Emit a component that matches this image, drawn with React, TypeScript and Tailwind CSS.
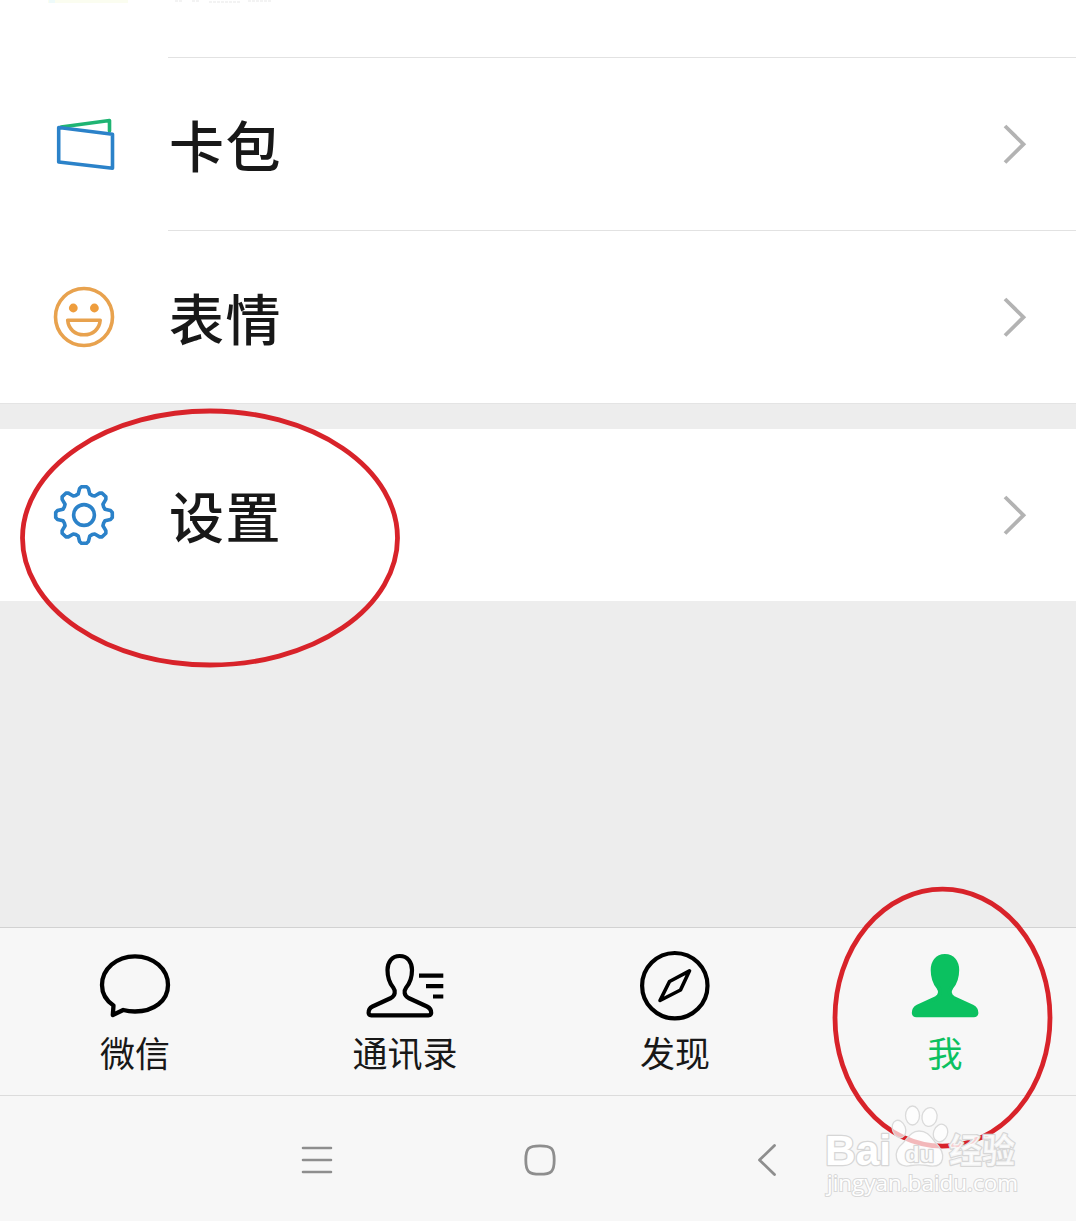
import type { ReactNode } from "react";

// One gear tooth plus the valley that leads to the next one, in coordinates around the hub
const TOOTH = [
  [-5.8, -21],
  [-4.4, -26.5],
  [-2.6, -28.3],
  [2.6, -28.3],
  [4.4, -26.5],
  [5.8, -21],
  [8.1, -19.6],
];

const gearPoints = Array.from({ length: 8 })
  .flatMap((_, i) => {
    const a = (i * Math.PI) / 4;
    return TOOTH.map(
      ([x, y]) =>
        `${(x * Math.cos(a) - y * Math.sin(a)).toFixed(2)},${(x * Math.sin(a) + y * Math.cos(a)).toFixed(2)}`
    );
  })
  .join(" ");

function CardIcon() {
  return (
    <svg width="64" height="64" viewBox="52 112 64 64" fill="none" strokeWidth="3.6" strokeLinejoin="round" strokeLinecap="round">
      <path d="M61 127 L109.500 120.500 V131" stroke="#1fb473" />
      <path d="M58.700 127.500 L112.500 134.300 V168.200 L58.700 162 Z" stroke="#2b82c9" />
    </svg>
  );
}

function SmileIcon() {
  return (
    <svg width="64" height="64" viewBox="52 285 64 64" fill="none" stroke="#e8a24e" strokeWidth="3.6">
      <circle cx="84" cy="317" r="28.5" />
      <circle cx="73.3" cy="308" r="4.4" fill="#ee9d3d" stroke="none" />
      <circle cx="94.4" cy="308" r="4.4" fill="#ee9d3d" stroke="none" />
      <path d="M67.7 320.2 H100.2 C99.5 329 93 334.8 84 334.8 C75 334.8 68.4 329 67.7 320.2 Z" strokeLinejoin="round" />
    </svg>
  );
}

function GearIcon() {
  return (
    <svg width="64" height="64" viewBox="-32 -32 64 64" fill="none" stroke="#2b82c9" strokeWidth="3.6" strokeLinejoin="round">
      <polygon points={gearPoints} />
      <circle r="10.4" />
    </svg>
  );
}

function ChatIcon() {
  return (
    <svg width="80" height="80" viewBox="95 945 80 80" fill="none" stroke="#000" strokeWidth="4.3" strokeLinejoin="round">
      <path d="M113.500 1005.500 C106.500 1000.800 102 993.500 102 985 C102 969 116.500 956.300 135 956.300 C153.500 956.300 168 969 168 985 C168 1001 153.500 1011.500 135 1011.500 C130.500 1011.500 127 1011 123.200 1010 L112.800 1015 Z" />
    </svg>
  );
}

const PERSON =
  "M399.7 956 C391.500 956 387.500 962.500 387.500 970 C387.500 978 389.500 983 393.200 987.500 C395.800 991 395.300 995.500 391 998 L372.500 1006.500 C369.500 1008 368.500 1010.500 368.600 1013 C368.800 1014.600 369.800 1015.300 371.300 1015.300 H428.500 C430 1015.300 431 1014.600 431.200 1013 C431.300 1010.500 430 1008 427 1006.500 L408.500 998 C404 995.500 403.600 991 406.200 987.500 C410 983 412 978 412 970 C412 962.500 408 956 399.700 956 Z";

function ContactsIcon() {
  return (
    <svg width="80" height="80" viewBox="365 945 80 80" fill="none" stroke="#000" strokeWidth="4.2" strokeLinejoin="round">
      <path d={PERSON} />
      <path d="M419 975.700 H443.300 M426 986.100 H443.300 M433 996.500 H443.300" />
    </svg>
  );
}

function CompassIcon() {
  return (
    <svg width="80" height="80" viewBox="635 945 80 80" fill="none" stroke="#000" strokeWidth="4.2" strokeLinejoin="round">
      <circle cx="674.8" cy="985.700" r="32.700" />
      <path d="M689.500 970.800 L669.500 981.500 L660 1000.500 L680.500 990 Z" strokeWidth="3.600" />
    </svg>
  );
}

function MeIcon() {
  return (
    <svg width="80" height="80" viewBox="359.800 945 80 80" fill="#0bc160" stroke="#0bc160" strokeWidth="4" strokeLinejoin="round">
      <path d={PERSON} />
    </svg>
  );
}

function Row({ icon, label }: { icon: ReactNode; label: string }) {
  return (
    <div className="flex h-[172px] items-center bg-white pl-[52px] pr-[47px]">
      {icon}
      <span className="ml-[53px] flex-1 pb-0.5 text-[55px] leading-none font-medium tracking-[1.5px] text-[#181818]">{label}</span>
      <svg width="28" height="44" viewBox="0 0 28 44" fill="none" stroke="#b3b3b3" strokeWidth="3.8">
        <path d="M4 4 L22.500 22.200 L4 40.500" />
      </svg>
    </div>
  );
}

function Divider() {
  return <div className="ml-[168px] h-px bg-[#e2e2e2]" />;
}

const tabs = [
  { label: "微信", icon: <ChatIcon /> },
  { label: "通讯录", icon: <ContactsIcon /> },
  { label: "发现", icon: <CompassIcon /> },
  { label: "我", icon: <MeIcon />, active: true },
];

function Watermark() {
  return (
    <svg className="absolute left-[810px] top-[1085px]" width="240" height="125" viewBox="0 0 240 125">
      <g fill="#fff" fillOpacity="0.68" stroke="#dadada" strokeWidth="1.300">
        <ellipse cx="89" cy="44" rx="6.500" ry="9" transform="rotate(-20 89 44)" />
        <ellipse cx="102.500" cy="30.500" rx="7" ry="9.500" />
        <ellipse cx="119.500" cy="32" rx="7.500" ry="9.500" transform="rotate(10 119.500 32)" />
        <ellipse cx="130.500" cy="48" rx="7" ry="9" transform="rotate(20 130.500 48)" />
        <path d="M109 46 C101 46 98 53 93 58 C87 63 85 67 86.500 73 C88 80 94 82 101 80.500 C107 79.500 111 79.500 117 80.500 C124 82 131 81 132.500 74 C134 67 130 62 125 57 C120 51 117 46 109 46 Z" />
      </g>
      <g fill="#fff" stroke="#d6d6d6" strokeLinejoin="round" paintOrder="stroke" className="font-['Liberation_Sans','Noto_Sans_CJK_SC',sans-serif] font-bold">
        <text x="15" y="80" fontSize="43" strokeWidth="2.6" textLength="66" lengthAdjust="spacingAndGlyphs">Bai</text>
        <text x="95" y="77" fontSize="22" strokeWidth="2.4" textLength="29" lengthAdjust="spacingAndGlyphs" fillOpacity="0.9">du</text>
        <text x="139" y="78" fontSize="34" strokeWidth="2.4" textLength="66" lengthAdjust="spacingAndGlyphs" fillOpacity="0.8">经验</text>
      </g>
      <text x="17" y="106" fontSize="22" textLength="191" lengthAdjust="spacingAndGlyphs" fill="#fff" stroke="#d8d8d8" strokeWidth="2" paintOrder="stroke" className="font-['Open_Sans',sans-serif]">
        jingyan.baidu.com
      </text>
    </svg>
  );
}

export default function App() {
  return (
    <div className="relative flex h-[1221px] w-[1076px] flex-col overflow-hidden bg-[#ededed] font-['Noto_Sans_CJK_SC',sans-serif]">
      <div className="h-[57px] bg-white">
        <svg width="300" height="12" viewBox="0 0 300 12">
          <path d="M48 1.500 H128" stroke="#fbfdf0" strokeWidth="3" />
          <path d="M49 1.500 H55" stroke="#eefafa" strokeWidth="3" />
          <path d="M175 1 H183 M192 1 H200 M209 2 H240 M248 1 H272" stroke="#f3f3f3" strokeWidth="2" strokeDasharray="3 1" />
        </svg>
      </div>
      <div className="bg-white">
        <Divider />
        <Row icon={<CardIcon />} label="卡包" />
        <Divider />
        <Row icon={<SmileIcon />} label="表情" />
      </div>
      <div className="h-[26px] border-t border-[#e4e4e4] bg-[#ededed]" />
      <Row icon={<GearIcon />} label="设置" />
      <div className="flex-1" />

      <div className="flex h-[168px] shrink-0 border-t border-[#d2d2d2] bg-[#f7f7f7]">
        {tabs.map((tab) => (
          <div key={tab.label} className="flex w-[270px] shrink-0 flex-col items-center pt-[17px]">
            {tab.icon}
            <span className={`mt-[9px] text-[35px] leading-[36px] ${tab.active ? "text-[#0bc160]" : "text-[#181818]"}`}>
              {tab.label}
            </span>
          </div>
        ))}
      </div>

      <div className="flex h-[126px] shrink-0 items-center border-t border-[#dcdcdc] bg-[#f7f7f7] pt-[2px] pl-[299px]">
        <svg width="36" height="36" viewBox="0 0 36 36" stroke="#8e8e8e" strokeWidth="2.600" strokeLinecap="round">
          <path d="M4 6 H32 M4 18 H32 M4 30 H32" />
        </svg>
        <svg className="ml-[187px]" width="36" height="36" viewBox="0 0 36 36" fill="none" stroke="#8e8e8e" strokeWidth="2.800">
          <path d="M18 3.800 C29.500 3.800 32.200 6.500 32.200 18 C32.200 29.500 29.500 32.200 18 32.200 C6.500 32.200 3.800 29.500 3.800 18 C3.800 6.500 6.500 3.800 18 3.800 Z" />
        </svg>
        <svg className="ml-[191px]" width="36" height="36" viewBox="0 0 36 36" fill="none" stroke="#8e8e8e" strokeWidth="2.800" strokeLinecap="round" strokeLinejoin="round">
          <path d="M25.500 3.500 L10.500 18 L25.500 32.500" />
        </svg>
      </div>

      <svg className="absolute inset-0" width="1076" height="1221" viewBox="0 0 1076 1221" fill="none" stroke="#d8232a" strokeWidth="4.800">
        <ellipse cx="210" cy="538" rx="187.500" ry="127" />
        <ellipse cx="942.500" cy="1017.700" rx="107.500" ry="128.500" />
      </svg>
      <Watermark />
    </div>
  );
}
